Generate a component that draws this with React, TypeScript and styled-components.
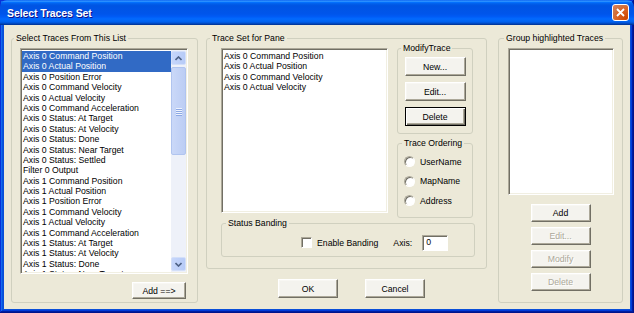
import styled, { createGlobalStyle } from "styled-components";

const GlobalStyle = createGlobalStyle`
  body {
    margin: 0;
    background: #ece9d8;
    font-family: "Liberation Sans", Arial, sans-serif;
  }
`;

const Window = styled.div`
  width: 634px;
  height: 313px;
  display: flex;
  flex-direction: column;
  background: #0a4fd8;
  box-shadow: inset -1px -1px #00138c, inset 1px 1px #0831d9, inset -2px -2px #001ea0,
    inset 2px 2px #166aee, inset -3px -3px #003bda, inset 3px 3px #0855dd;
  box-sizing: border-box;
  padding: 0 4px 4px 4px;
  overflow: hidden;
`;

const TitleBar = styled.div`
  height: 25px;
  margin: 0 -4px;
  padding: 0 5px 0 7px;
  display: flex;
  align-items: center;
  justify-content: space-between;
  background: linear-gradient(
    180deg,
    #0058ee 0%,
    #3593ff 4%,
    #288eff 6%,
    #127dff 8%,
    #036ffc 10%,
    #0262ee 14%,
    #0057e5 20%,
    #0054e3 24%,
    #0055eb 56%,
    #005bf5 66%,
    #026afe 76%,
    #0062ef 86%,
    #0052d6 92%,
    #0040ab 96%,
    #003092 100%
  );
  border-radius: 7px 7px 0 0;
`;

const Title = styled.span`
  color: #fff;
  font-weight: bold;
  font-size: 10.5px;
  text-shadow: 1px 1px #0f1089;
  letter-spacing: -0.1px;
`;

const CloseButton = styled.div`
  width: 17px;
  height: 17px;
  box-sizing: border-box;
  border: 1px solid #fff;
  border-radius: 3px;
  background: radial-gradient(circle at 90% 90%, #cc4600 0%, #dc6527 55%, #cd7546 70%, #e5805a 100%);
  display: flex;
  align-items: center;
  justify-content: center;
`;

const Body = styled.div`
  flex: 1;
  background: #ece9d8;
  display: flex;
  padding: 8px 7px 0 7px;
  gap: 8px;
`;

const Group = styled.fieldset<{ $w: number; $h: number }>`
  width: ${(p) => p.$w}px;
  height: ${(p) => p.$h}px;
  box-sizing: border-box;
  margin: 0;
  padding: 0;
  min-width: 0;
  border: 1px solid #d0d0bf;
  border-radius: 3px;
  display: flex;
  flex-direction: column;
`;

const Legend = styled.legend<{ $inset: number }>`
  margin-left: ${(p) => p.$inset}px;
  padding: 0 2px;
  font-size: 8.7px;
  line-height: 11px;
  color: #000;
  white-space: nowrap;
`;

const GroupInner = styled.div<{ $pad: string }>`
  padding: ${(p) => p.$pad};
  display: flex;
  flex-direction: column;
`;

const Listbox = styled.div<{ $w: number; $h: number; $mt?: number }>`
  width: ${(p) => p.$w}px;
  height: ${(p) => p.$h}px;
  margin-top: ${(p) => p.$mt ?? 0}px;
  flex-shrink: 0;
  box-sizing: border-box;
  background: #fff;
  border: 1px solid;
  border-color: #aca899 #fff #fff #aca899;
  box-shadow: inset 1px 1px 0 #716f64, inset -1px -1px 0 #f1efe2;
  padding: 1px;
  display: flex;
  overflow: hidden;
`;

const Items = styled.div`
  flex: 1;
  padding-top: 1px;
  overflow: hidden;
`;

const Item = styled.div<{ $selected?: boolean }>`
  height: 10.4px;
  line-height: 10.4px;
  font-size: 8.7px;
  padding-left: 1px;
  white-space: nowrap;
  color: ${(p) => (p.$selected ? "#fff" : "#000")};
  background: ${(p) => (p.$selected ? "#316ac5" : "transparent")};
`;

const ScrollBar = styled.div`
  width: 15px;
  display: flex;
  flex-direction: column;
  background: #eef1f9;
`;

const ScrollArrow = styled.div`
  height: 12px;
  margin: 1px 0;
  border-radius: 2px;
  background: linear-gradient(90deg, #c6d6fb, #b7cbf7);
  border: 1px solid #d3dff9;
  display: flex;
  align-items: center;
  justify-content: center;
`;

const Track = styled.div`
  flex: 1;
  display: flex;
  flex-direction: column;
`;

const Thumb = styled.div`
  margin-top: 1px;
  height: 86px;
  border-radius: 2px;
  background: linear-gradient(90deg, #cad8f8, #bccdf4);
  border: 1px solid #b0c4ef;
  display: flex;
  flex-direction: column;
  align-items: center;
  justify-content: center;
  gap: 1px;
`;

const Grip = styled.span`
  width: 6px;
  height: 1px;
  background: #eef3fd;
  box-shadow: 0 1px 0 #8ca8e4;
`;

const Button = styled.button<{ $w: number; $h?: number; $default?: boolean }>`
  width: ${(p) => p.$w}px;
  height: ${(p) => p.$h ?? 18}px;
  flex-shrink: 0;
  padding: 0;
  font-family: "Liberation Sans", Arial, sans-serif;
  font-size: 8.7px;
  color: ${(p) => (p.disabled ? "#aca899" : "#000")};
  text-shadow: ${(p) => (p.disabled ? "1px 1px 0 #fff" : "none")};
  background: #f4f3ee;
  border: 1px solid;
  border-color: ${(p) => (p.$default ? "#000" : "#fff #716f64 #716f64 #fff")};
  box-shadow: ${(p) =>
    p.$default
      ? "inset 1px 1px 0 #fff, inset -1px -1px 0 #716f64, inset -2px -2px 0 #aca899"
      : "inset -1px -1px 0 #aca899, inset 1px 1px 0 #f8f7f3"};
`;

const RightRow = styled.div`
  display: flex;
  justify-content: flex-end;
  padding-right: 2px;
  margin-top: 8px;
`;

const MiddleColumn = styled.div`
  display: flex;
  flex-direction: column;
  margin-right: 3px;
`;

const PaneRow = styled.div`
  display: flex;
  align-items: flex-start;
  gap: 9px;
`;

const SideColumn = styled.div`
  display: flex;
  flex-direction: column;
  gap: 4px;
  margin-top: -1px;
`;

const ButtonStack = styled.div<{ $gap: number; $mt: number }>`
  display: flex;
  flex-direction: column;
  align-items: center;
  gap: ${(p) => p.$gap}px;
  margin-top: ${(p) => p.$mt}px;
`;

const RadioRow = styled.label`
  display: flex;
  align-items: center;
  gap: 5px;
  height: 19.5px;
  font-size: 8.7px;
`;

const Radio = styled.span`
  width: 11px;
  height: 11px;
  box-sizing: border-box;
  border-radius: 50%;
  background: #fff;
  border: 1px solid;
  border-color: #aca899 #fff #fff #aca899;
  box-shadow: inset 1px 1px 0 #716f64;
`;

const BandingRow = styled.div`
  display: flex;
  align-items: center;
  height: 27px;
  padding-left: 79px;
  font-size: 8.7px;
`;

const CheckBox = styled.span`
  width: 11px;
  height: 11px;
  box-sizing: border-box;
  background: #fff;
  border: 1px solid;
  border-color: #aca899 #fff #fff #aca899;
  box-shadow: inset 1px 1px 0 #716f64;
  margin-right: 5px;
`;

const AxisLabel = styled.span`
  margin-left: 15px;
  margin-right: 10px;
`;

const AxisInput = styled.div`
  width: 26px;
  height: 16px;
  box-sizing: border-box;
  background: #fff;
  border: 1px solid;
  border-color: #aca899 #fff #fff #aca899;
  box-shadow: inset 1px 1px 0 #716f64;
  font-size: 8.7px;
  line-height: 13px;
  padding-left: 3px;
`;

const DialogButtons = styled.div`
  display: flex;
  gap: 27px;
  padding-left: 72px;
  margin-top: 10px;
`;

const sourceTraces = [
  "Axis 0 Command Position",
  "Axis 0 Actual Position",
  "Axis 0 Position Error",
  "Axis 0 Command Velocity",
  "Axis 0 Actual Velocity",
  "Axis 0 Command Acceleration",
  "Axis 0 Status: At Target",
  "Axis 0 Status: At Velocity",
  "Axis 0 Status: Done",
  "Axis 0 Status: Near Target",
  "Axis 0 Status: Settled",
  "Filter 0 Output",
  "Axis 1 Command Position",
  "Axis 1 Actual Position",
  "Axis 1 Position Error",
  "Axis 1 Command Velocity",
  "Axis 1 Actual Velocity",
  "Axis 1 Command Acceleration",
  "Axis 1 Status: At Target",
  "Axis 1 Status: At Velocity",
  "Axis 1 Status: Done",
  "Axis 1 Status: Near Target",
];

const paneTraces = [
  "Axis 0 Command Position",
  "Axis 0 Actual Position",
  "Axis 0 Command Velocity",
  "Axis 0 Actual Velocity",
];

const Chevron = ({ up }: { up?: boolean }) => (
  <svg width="7" height="5" viewBox="0 0 7 5">
    <path
      d={up ? "M0.5 4 L3.5 1 L6.5 4" : "M0.5 1 L3.5 4 L6.5 1"}
      fill="none"
      stroke="#4d6185"
      strokeWidth="1.6"
    />
  </svg>
);

const App = () => {
  return (
    <Window>
      <GlobalStyle />
      <TitleBar>
        <Title>Select Traces Set</Title>
        <CloseButton>
          <svg width="9" height="9" viewBox="0 0 9 9">
            <path d="M1 1 L8 8 M8 1 L1 8" stroke="#fff" strokeWidth="1.8" />
          </svg>
        </CloseButton>
      </TitleBar>
      <Body>
        <Group $w={187} $h={270}>
          <Legend $inset={2}>Select Traces From This List</Legend>
          <GroupInner $pad="4px 9px 0 8px">
            <Listbox $w={168} $h={226}>
              <Items>
                {sourceTraces.map((t, i) => (
                  <Item key={t} $selected={i < 2}>
                    {t}
                  </Item>
                ))}
              </Items>
              <ScrollBar>
                <ScrollArrow>
                  <Chevron up />
                </ScrollArrow>
                <Track>
                  <Thumb>
                    <Grip />
                    <Grip />
                    <Grip />
                    <Grip />
                  </Thumb>
                </Track>
                <ScrollArrow>
                  <Chevron />
                </ScrollArrow>
              </ScrollBar>
            </Listbox>
            <RightRow>
              <Button $w={54} $h={17}>
                Add ==&gt;
              </Button>
            </RightRow>
          </GroupInner>
        </Group>

        <MiddleColumn>
          <Group $w={281} $h={236}>
            <Legend $inset={3}>Trace Set for Pane</Legend>
            <GroupInner $pad="0 0 0 14px">
              <PaneRow>
                <Listbox $w={167} $h={165} $mt={4}>
                  <Items>
                    {paneTraces.map((t) => (
                      <Item key={t}>{t}</Item>
                    ))}
                  </Items>
                </Listbox>
                <SideColumn>
                  <Group $w={76} $h={91}>
                    <Legend $inset={3}>ModifyTrace</Legend>
                    <ButtonStack $gap={6} $mt={3}>
                      <Button $w={61} $h={19}>
                        New...
                      </Button>
                      <Button $w={61} $h={19}>
                        Edit...
                      </Button>
                      <Button $w={61} $h={19} $default>
                        Delete
                      </Button>
                    </ButtonStack>
                  </Group>
                  <Group $w={76} $h={80}>
                    <Legend $inset={4}>Trace Ordering</Legend>
                    <GroupInner $pad="3px 0 0 6px">
                      <RadioRow>
                        <Radio />
                        UserName
                      </RadioRow>
                      <RadioRow>
                        <Radio />
                        MapName
                      </RadioRow>
                      <RadioRow>
                        <Radio />
                        Address
                      </RadioRow>
                    </GroupInner>
                  </Group>
                </SideColumn>
              </PaneRow>
              <Group $w={254} $h={39}>
                <Legend $inset={4}>Status Banding</Legend>
                <BandingRow>
                  <CheckBox />
                  Enable Banding
                  <AxisLabel>Axis:</AxisLabel>
                  <AxisInput>0</AxisInput>
                </BandingRow>
              </Group>
            </GroupInner>
          </Group>
          <DialogButtons>
            <Button $w={60} $h={19}>
              OK
            </Button>
            <Button $w={60} $h={19}>
              Cancel
            </Button>
          </DialogButtons>
        </MiddleColumn>

        <Group $w={125} $h={270}>
          <Legend $inset={5}>Group highlighted Traces</Legend>
          <GroupInner $pad="4px 0 0 9px">
            <Listbox $w={106} $h={147} />
          </GroupInner>
          <ButtonStack $gap={5} $mt={9}>
            <Button $w={60}>Add</Button>
            <Button $w={60} disabled>
              Edit...
            </Button>
            <Button $w={60} disabled>
              Modify
            </Button>
            <Button $w={60} disabled>
              Delete
            </Button>
          </ButtonStack>
        </Group>
      </Body>
    </Window>
  );
};

export default App;
